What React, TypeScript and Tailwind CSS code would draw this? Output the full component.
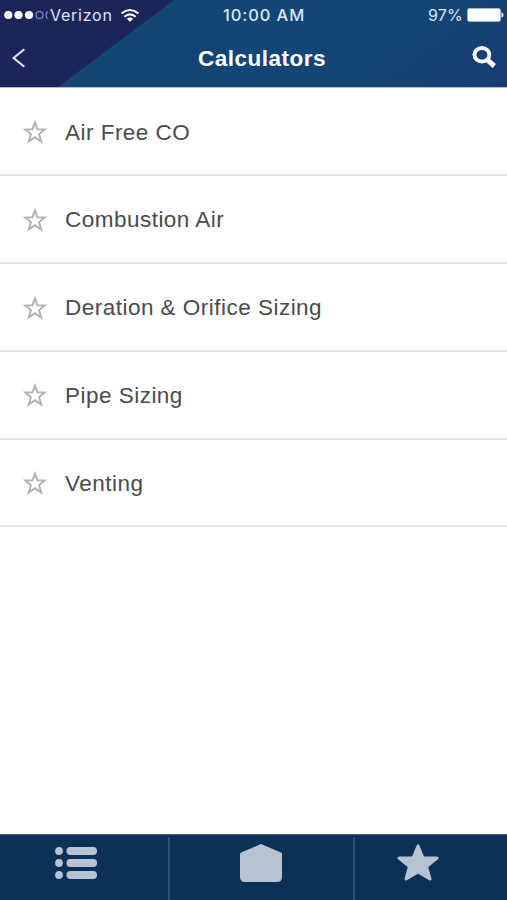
const calculators = [
  "Air Free CO",
  "Combustion Air",
  "Deration & Orifice Sizing",
  "Pipe Sizing",
  "Venting",
];

function StatusBar() {
  return (
    <div className="flex h-[30px] items-center justify-between font-['Inter',sans-serif] text-[16px] leading-[30px] text-[#dce8f4]">
      <div className="flex w-[200px] items-center pl-[4px]">
        <svg width="44" height="12" viewBox="0 0 44 12" fill="#fff">
          <circle cx="4.3" cy="6" r="4.1" />
          <circle cx="14.5" cy="6" r="4.1" />
          <circle cx="25" cy="6" r="4.1" />
          <circle cx="35.5" cy="6" r="3.5" fill="none" stroke="#8390b5" strokeWidth="1.2" />
          <path d="M43.5 2.5Q40.5 6 43.5 9.5" fill="none" stroke="#8390b5" strokeWidth="1.2" />
        </svg>
        <span className="ml-[2px] w-[63px] tracking-[0.75px]">Verizon</span>
        <svg className="ml-[8px]" width="18" height="13" viewBox="0 0 18 13" fill="none" stroke="#fff" strokeWidth="2">
          <path d="M0.6 4.4Q9 -2.3 17.4 4.4" />
          <path d="M3.4 7.7Q9 3 14.6 7.7" />
          <path d="M5.8 9.8Q9 7 12.2 9.8L9 12.7Z" fill="#fff" stroke="none" />
        </svg>
      </div>
      <span className="ml-[23px] w-[84px] whitespace-nowrap text-[16.5px] font-medium tracking-[0.9px]">10:00 AM</span>
      <div className="flex w-[200px] items-center justify-end pr-[3px]">
        <span className="tracking-[0.2px]">97%</span>
        <svg className="ml-[4px]" width="37" height="14" viewBox="0 0 37 14">
          <rect x="0.5" y="0.5" width="33" height="13" rx="2" fill="#fff" stroke="#9eb3cf" />
          <path d="M34.5 4Q38.5 7 34.5 10Z" fill="#fff" />
        </svg>
      </div>
    </div>
  );
}

function Header() {
  return (
    <header className="h-[88px] border-b border-[#a9bfd6] bg-[linear-gradient(143.13deg,#1d2459_0px,#1d2459_104px,#134675_105px,#134675_270px,#183b71_100%)]">
      <StatusBar />
      <div className="flex h-[57px] items-center justify-between">
        <svg className="mb-[2px] ml-[12px]" width="14" height="20" viewBox="0 0 14 20" fill="none" stroke="#e8eef7" strokeWidth="2">
          <path d="M12.3 1.2L1.6 10L12.3 18.8" />
        </svg>
        <h1 className="ml-[26px] text-[22.5px] font-bold tracking-[0.5px] text-white">Calculators</h1>
        <svg className="mr-[11px] mb-[4px]" width="24" height="22" viewBox="0 0 24 22" fill="none" stroke="#fff">
          <ellipse cx="9.9" cy="8.8" rx="7.5" ry="6.8" strokeWidth="3.9" />
          <path d="M15.8 14.3L22.3 20" strokeWidth="5" />
        </svg>
      </div>
    </header>
  );
}

function CalculatorRow({ name }: { name: string }) {
  return (
    <li className="flex h-[87.7px] items-center border-b-2 border-[#e4e4e4] pl-[22px]">
      <svg className="mt-[1px]" width="26" height="24" viewBox="0 0 26 24" fill="none" stroke="#b3b3b3" strokeWidth="2">
        <path d="M13 2.6L15.5 9.2L22.6 9.5L17.1 14L19.2 21.4L13 17.3L6.8 21.4L8.9 14L3.4 9.5L10.5 9.2Z" />
      </svg>
      <span className="mt-[2px] ml-[17px] text-[22.5px] tracking-[0.48px] text-[#4b4b4b]">{name}</span>
    </li>
  );
}

function TabBar() {
  return (
    <nav className="flex h-[66px] border-t border-[#4a6784] bg-[#0b3156] pt-[2px] text-[#b7c3d3]">
      <button className="flex w-[170px] justify-center border-r-2 border-[#2b5173] pt-[10px]">
        <svg className="mr-[17px]" width="42" height="32" viewBox="0 0 42 32" fill="currentColor">
          {[4, 16, 28].map((y) => (
            <g key={y}>
              <circle cx="4" cy={y} r="3.9" />
              <rect x="11.5" y={y - 3.9} width="30.5" height="7.8" rx="3.7" />
            </g>
          ))}
        </svg>
      </button>
      <button className="flex w-[185px] justify-center border-r-2 border-[#2b5173] pt-[7px]">
        <svg className="mr-[1px]" width="42" height="38" viewBox="0 0 42 38" fill="currentColor">
          <path d="M21 0L41 8.5Q42 9 42 10V33Q42 38 37 38H5Q0 38 0 33V10Q0 9 1 8.5Z" />
        </svg>
      </button>
      <button className="flex flex-1 justify-center pt-[7px]">
        <svg className="mr-[26px]" width="42" height="38" viewBox="0 0 42 38" fill="currentColor" stroke="currentColor" strokeWidth="3" strokeLinejoin="round">
          <path d="M21 2L26 14H40L29.5 22.5L33 35L21 28L9 35L12.5 22.5L2 14H16Z" />
        </svg>
      </button>
    </nav>
  );
}

export default function App() {
  return (
    <div className="flex h-[900px] w-[507px] flex-col overflow-hidden bg-white font-['Liberation_Sans',Arial,sans-serif]">
      <Header />
      <ul className="flex-1 pt-[0.8px]">
        {calculators.map((name) => (
          <CalculatorRow key={name} name={name} />
        ))}
      </ul>
      <TabBar />
    </div>
  );
}
